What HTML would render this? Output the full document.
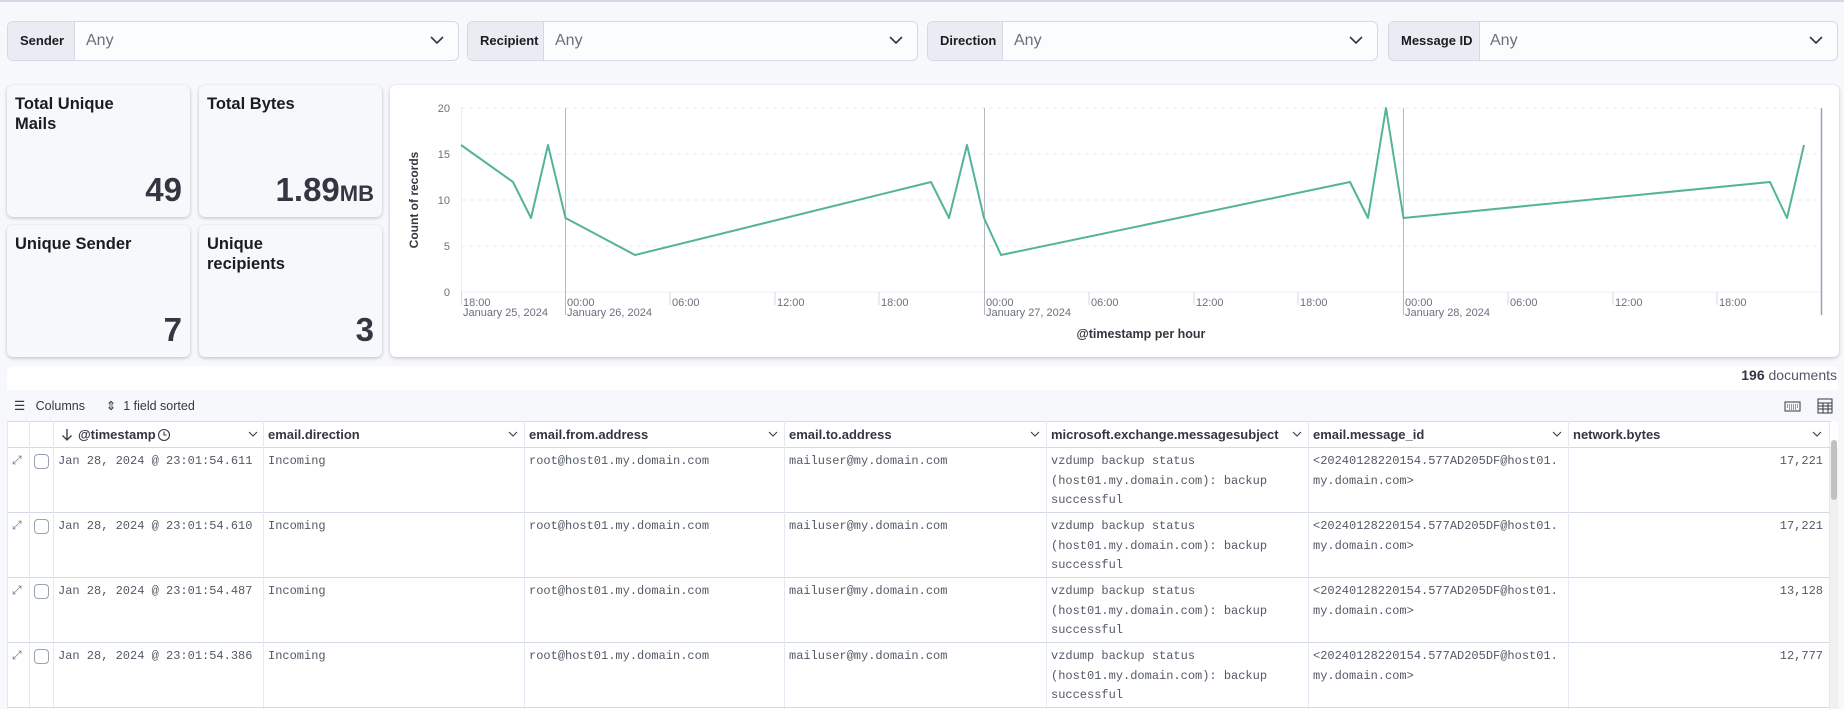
<!DOCTYPE html>
<html><head><meta charset="utf-8"><style>
*{box-sizing:border-box;margin:0;padding:0}
body{width:1844px;height:709px;overflow:hidden;background:#f7f8fc;font-family:"Liberation Sans",sans-serif;color:#343741;position:relative}
.a{position:absolute}
.filter{position:absolute;top:21px;height:40px;border:1px solid #d3dae6;border-radius:6px;background:#fbfcfd;overflow:hidden}
.filter .lb{position:absolute;left:0;top:0;bottom:0;background:#e9edf3;font-size:13px;font-weight:bold;color:#1a1c21;line-height:38px;padding-left:12px;border-right:1px solid #d3dae6}
.filter .any{position:absolute;top:0;line-height:38px;font-size:16px;color:#69707d}
.filter svg{position:absolute;right:14px;top:13px}
.card{position:absolute;background:#f7f8fc;border-radius:6px;box-shadow:0 1px 3px rgba(0,0,0,.18),0 2px 6px rgba(0,0,0,.06)}
.card .t{position:absolute;left:8px;top:9px;font-size:16.5px;font-weight:bold;line-height:20px;color:#1a1c21}
.card .n{position:absolute;right:8px;bottom:8px;font-size:33px;font-weight:bold;color:#343741}
.row{position:absolute;left:0;width:1844px;height:60px}
.cell{position:absolute;font-family:"Liberation Mono",monospace;font-size:12px;line-height:19.5px;color:#535966;white-space:nowrap}
.hd{position:absolute;top:422px;height:25px;line-height:25px;font-size:13px;font-weight:bold;color:#343741;white-space:nowrap}
.chev{position:absolute;top:431px}
.vl{position:absolute;width:1px;background:#e3e8f2}
.hl{position:absolute;height:1px;background:#d3dae6}
</style></head><body>
<div class="a" style="left:0;top:0;width:1844px;height:2px;background:#d3dae6"></div>

<div class="filter" style="left:7px;width:452px"><div class="lb" style="width:67px">Sender</div><div class="any" style="left:78px">Any</div><svg width="14" height="10"><path d="M1 2l6 6 6-6" stroke="#343741" stroke-width="1.6" fill="none"/></svg></div>
<div class="filter" style="left:467px;width:451px"><div class="lb" style="width:76px">Recipient</div><div class="any" style="left:87px">Any</div><svg width="14" height="10"><path d="M1 2l6 6 6-6" stroke="#343741" stroke-width="1.6" fill="none"/></svg></div>
<div class="filter" style="left:927px;width:451px"><div class="lb" style="width:75px">Direction</div><div class="any" style="left:86px">Any</div><svg width="14" height="10"><path d="M1 2l6 6 6-6" stroke="#343741" stroke-width="1.6" fill="none"/></svg></div>
<div class="filter" style="left:1388px;width:450px"><div class="lb" style="width:91px">Message ID</div><div class="any" style="left:101px">Any</div><svg width="14" height="10"><path d="M1 2l6 6 6-6" stroke="#343741" stroke-width="1.6" fill="none"/></svg></div>

<div class="card" style="left:7px;top:85px;width:183px;height:132px"><div class="t">Total Unique<br>Mails</div><div class="n">49</div></div>
<div class="card" style="left:199px;top:85px;width:183px;height:132px"><div class="t">Total Bytes</div><div class="n">1.89<span style="font-size:22px">MB</span></div></div>
<div class="card" style="left:7px;top:225px;width:183px;height:132px"><div class="t">Unique Sender</div><div class="n">7</div></div>
<div class="card" style="left:199px;top:225px;width:183px;height:132px"><div class="t">Unique<br>recipients</div><div class="n">3</div></div>

<div class="card" style="left:390px;top:85px;width:1449px;height:272px;background:#fff"></div>
<svg class="a" style="left:0;top:0" width="1844" height="360" font-family="Liberation Sans, sans-serif">
<g stroke="#e6e9ef" stroke-dasharray="4 4"><line x1="461" y1="108" x2="1821" y2="108"/><line x1="461" y1="154" x2="1821" y2="154"/><line x1="461" y1="200" x2="1821" y2="200"/><line x1="461" y1="246" x2="1821" y2="246"/></g>
<line x1="461" y1="292" x2="1821" y2="292" stroke="#eceff4"/>
<line x1="461.5" y1="108" x2="461.5" y2="292" stroke="#eceff4"/>
<g stroke="#b5b8be"><line x1="565.5" y1="108" x2="565.5" y2="315"/><line x1="984.5" y1="108" x2="984.5" y2="315"/><line x1="1403.5" y1="108" x2="1403.5" y2="315"/></g>
<line x1="1821.5" y1="108" x2="1821.5" y2="315" stroke="#98a2b3" stroke-width="1.5"/>
<g stroke="#d3dae6"><line x1="461.5" y1="292" x2="461.5" y2="305"/><line x1="670" y1="292" x2="670" y2="305"/><line x1="775" y1="292" x2="775" y2="305"/><line x1="879" y1="292" x2="879" y2="305"/><line x1="1089" y1="292" x2="1089" y2="305"/><line x1="1194" y1="292" x2="1194" y2="305"/><line x1="1298" y1="292" x2="1298" y2="305"/><line x1="1508" y1="292" x2="1508" y2="305"/><line x1="1613" y1="292" x2="1613" y2="305"/><line x1="1717" y1="292" x2="1717" y2="305"/></g>
<g font-size="11" fill="#69707d" text-anchor="end"><text x="450" y="112">20</text><text x="450" y="158">15</text><text x="450" y="204">10</text><text x="450" y="250">5</text><text x="450" y="296">0</text></g>
<g font-size="11" fill="#69707d"><text x="463" y="306">18:00</text><text x="463" y="316">January 25, 2024</text>
<text x="567" y="306">00:00</text><text x="567" y="316">January 26, 2024</text>
<text x="672" y="306">06:00</text><text x="777" y="306">12:00</text><text x="881" y="306">18:00</text>
<text x="986" y="306">00:00</text><text x="986" y="316">January 27, 2024</text>
<text x="1091" y="306">06:00</text><text x="1196" y="306">12:00</text><text x="1300" y="306">18:00</text>
<text x="1405" y="306">00:00</text><text x="1405" y="316">January 28, 2024</text>
<text x="1510" y="306">06:00</text><text x="1615" y="306">12:00</text><text x="1719" y="306">18:00</text></g>
<text x="1141" y="338" font-size="12.5" font-weight="bold" fill="#343741" text-anchor="middle">@timestamp per hour</text>
<text transform="translate(418,200) rotate(-90)" font-size="12" font-weight="bold" fill="#343741" text-anchor="middle">Count of records</text>
<polyline fill="none" stroke="#54b399" stroke-width="2" stroke-linejoin="round" points="461,145 513,182 531,218 548,145 565.5,218 635,255 931,182 949,218 967,145 984,218 1001,255 1350,182 1368,218 1386,108 1403.5,218 1770,182 1787,218 1804,145"/>
</svg>

<div class="a" style="left:7px;top:366px;width:1831px;height:343px;background:#fff;border-radius:6px 6px 0 0"></div>
<div class="a" style="right:7px;top:367px;font-size:14px;color:#535966"><b style="color:#343741">196</b> documents</div>
<div class="a" style="left:7px;top:390px;width:1831px;height:32px;background:#f7f8fc"></div>
<div class="a" style="left:14px;top:398px;font-size:12.5px;color:#343741;white-space:nowrap">☰&nbsp;&nbsp; Columns &nbsp;&nbsp;&nbsp;&nbsp; ⇕ &nbsp;1 field sorted</div>
<svg class="a" style="left:1784px;top:398px" width="50" height="16"><rect x="1" y="4" width="15" height="9" fill="none" stroke="#343741"/><path d="M3 7h11M3 9h11M5 11h7" stroke="#343741" stroke-dasharray="1 1"/><rect x="34" y="1" width="14" height="14" fill="none" stroke="#343741"/><path d="M34 5h14M34 8h14M34 11h14M39 5v10M44 5v10" stroke="#343741"/></svg>

<div class="a" style="left:7px;top:422px;width:1831px;height:25px;background:#fff"></div>
<div class="hl" style="left:7px;top:421px;width:1824px"></div>
<div class="hl" style="left:7px;top:447px;width:1824px"></div>
<div class="hl" style="left:7px;top:512px;width:1824px"></div>
<div class="hl" style="left:7px;top:577px;width:1824px"></div>
<div class="hl" style="left:7px;top:642px;width:1824px"></div>
<div class="hl" style="left:7px;top:707px;width:1824px"></div>
<div class="vl" style="left:7px;top:421px;height:288px"></div>
<div class="vl" style="left:29px;top:421px;height:288px"></div>
<div class="vl" style="left:53px;top:421px;height:288px"></div>
<div class="vl" style="left:263px;top:421px;height:288px"></div>
<div class="vl" style="left:524px;top:421px;height:288px"></div>
<div class="vl" style="left:784px;top:421px;height:288px"></div>
<div class="vl" style="left:1046px;top:421px;height:288px"></div>
<div class="vl" style="left:1308px;top:421px;height:288px"></div>
<div class="vl" style="left:1568px;top:421px;height:288px"></div>
<div class="vl" style="left:1829px;top:421px;height:288px"></div>
<div class="a" style="left:1830px;top:448px;width:8px;height:261px;background:#f1f1f1"></div>
<div class="a" style="left:1831px;top:440px;width:6px;height:60px;background:#c1c1c1;border-radius:3px"></div>

<svg class="a" style="left:60px;top:428px" width="14" height="14"><path d="M7 1v11M2.5 7.5L7 12l4.5-4.5" stroke="#343741" stroke-width="1.3" fill="none"/></svg>
<div class="hd" style="left:78px">@timestamp</div>
<svg class="a" style="left:157px;top:428px" width="14" height="14"><circle cx="7" cy="7" r="5.5" stroke="#343741" stroke-width="1.1" fill="none"/><path d="M7 3.5V7h2.5" stroke="#343741" stroke-width="1.1" fill="none"/></svg>
<div class="hd" style="left:268px">email.direction</div>
<div class="hd" style="left:529px">email.from.address</div>
<div class="hd" style="left:789px">email.to.address</div>
<div class="hd" style="left:1051px">microsoft.exchange.messagesubject</div>
<div class="hd" style="left:1313px">email.message_id</div>
<div class="hd" style="left:1573px">network.bytes</div>
<svg class="chev" style="left:248px" width="10" height="7"><path d="M1 1l4 4 4-4" stroke="#343741" fill="none"/></svg>
<svg class="chev" style="left:508px" width="10" height="7"><path d="M1 1l4 4 4-4" stroke="#343741" fill="none"/></svg>
<svg class="chev" style="left:768px" width="10" height="7"><path d="M1 1l4 4 4-4" stroke="#343741" fill="none"/></svg>
<svg class="chev" style="left:1030px" width="10" height="7"><path d="M1 1l4 4 4-4" stroke="#343741" fill="none"/></svg>
<svg class="chev" style="left:1292px" width="10" height="7"><path d="M1 1l4 4 4-4" stroke="#343741" fill="none"/></svg>
<svg class="chev" style="left:1552px" width="10" height="7"><path d="M1 1l4 4 4-4" stroke="#343741" fill="none"/></svg>
<svg class="chev" style="left:1812px" width="10" height="7"><path d="M1 1l4 4 4-4" stroke="#343741" fill="none"/></svg>

<div class="row" style="top:452px">
<div class="cell" style="left:12px;top:0;color:#69707d">⤢</div>
<div class="a" style="left:34px;top:2px;width:15px;height:15px;border:1px solid #98a2b3;border-radius:4px"></div>
<div class="cell" style="left:58px;top:0">Jan 28, 2024 @ 23:01:54.611</div>
<div class="cell" style="left:268px;top:0">Incoming</div>
<div class="cell" style="left:529px;top:0">root@host01.my.domain.com</div>
<div class="cell" style="left:789px;top:0">mailuser@my.domain.com</div>
<div class="cell" style="left:1051px;top:0">vzdump backup status<br>(host01.my.domain.com): backup<br>successful</div>
<div class="cell" style="left:1313px;top:0">&lt;20240128220154.577AD205DF@host01.<br>my.domain.com&gt;</div>
<div class="cell" style="left:1573px;top:0;width:250px;text-align:right">17,221</div>
</div>
<div class="row" style="top:517px">
<div class="cell" style="left:12px;top:0;color:#69707d">⤢</div>
<div class="a" style="left:34px;top:2px;width:15px;height:15px;border:1px solid #98a2b3;border-radius:4px"></div>
<div class="cell" style="left:58px;top:0">Jan 28, 2024 @ 23:01:54.610</div>
<div class="cell" style="left:268px;top:0">Incoming</div>
<div class="cell" style="left:529px;top:0">root@host01.my.domain.com</div>
<div class="cell" style="left:789px;top:0">mailuser@my.domain.com</div>
<div class="cell" style="left:1051px;top:0">vzdump backup status<br>(host01.my.domain.com): backup<br>successful</div>
<div class="cell" style="left:1313px;top:0">&lt;20240128220154.577AD205DF@host01.<br>my.domain.com&gt;</div>
<div class="cell" style="left:1573px;top:0;width:250px;text-align:right">17,221</div>
</div>
<div class="row" style="top:582px">
<div class="cell" style="left:12px;top:0;color:#69707d">⤢</div>
<div class="a" style="left:34px;top:2px;width:15px;height:15px;border:1px solid #98a2b3;border-radius:4px"></div>
<div class="cell" style="left:58px;top:0">Jan 28, 2024 @ 23:01:54.487</div>
<div class="cell" style="left:268px;top:0">Incoming</div>
<div class="cell" style="left:529px;top:0">root@host01.my.domain.com</div>
<div class="cell" style="left:789px;top:0">mailuser@my.domain.com</div>
<div class="cell" style="left:1051px;top:0">vzdump backup status<br>(host01.my.domain.com): backup<br>successful</div>
<div class="cell" style="left:1313px;top:0">&lt;20240128220154.577AD205DF@host01.<br>my.domain.com&gt;</div>
<div class="cell" style="left:1573px;top:0;width:250px;text-align:right">13,128</div>
</div>
<div class="row" style="top:647px">
<div class="cell" style="left:12px;top:0;color:#69707d">⤢</div>
<div class="a" style="left:34px;top:2px;width:15px;height:15px;border:1px solid #98a2b3;border-radius:4px"></div>
<div class="cell" style="left:58px;top:0">Jan 28, 2024 @ 23:01:54.386</div>
<div class="cell" style="left:268px;top:0">Incoming</div>
<div class="cell" style="left:529px;top:0">root@host01.my.domain.com</div>
<div class="cell" style="left:789px;top:0">mailuser@my.domain.com</div>
<div class="cell" style="left:1051px;top:0">vzdump backup status<br>(host01.my.domain.com): backup<br>successful</div>
<div class="cell" style="left:1313px;top:0">&lt;20240128220154.577AD205DF@host01.<br>my.domain.com&gt;</div>
<div class="cell" style="left:1573px;top:0;width:250px;text-align:right">12,777</div>
</div>
</body></html>
